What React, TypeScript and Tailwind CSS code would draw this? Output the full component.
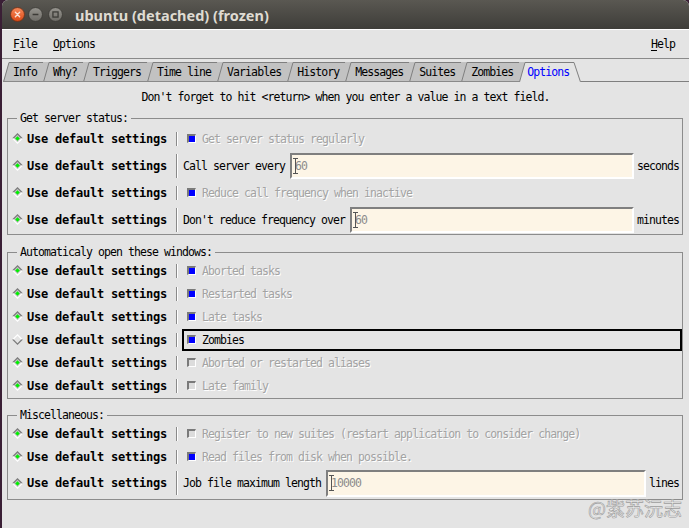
import React from "react";

function Diamond({ on }: { on: boolean }) {
  return (
    <svg width="11" height="11" viewBox="0 0 11 11" className="shrink-0">
      <polygon points="0,5.5 5.5,0 11,5.5" fill={on ? "#7a7a7a" : "#ffffff"} />
      <polygon points="0,5.5 5.5,11 11,5.5" fill={on ? "#ffffff" : "#7a7a7a"} />
      <polygon points="1.8,5.5 5.5,1.8 9.2,5.5 5.5,9.2" fill={on ? "#c4c4c4" : "#e4e4e4"} />
      {on && <polygon points="3.2,5.5 5.5,3.2 7.8,5.5 5.5,7.8" fill="#00f000" />}
    </svg>
  );
}

function IBeam() {
  return (
    <svg className="absolute left-[1px] top-1/2 -translate-y-1/2" width="6" height="16" viewBox="0 0 6 16">
      <path d="M0 0.5H5M2.5 0.5V15.5M0 15.5H5" stroke="#555" strokeWidth="1" fill="none" />
    </svg>
  );
}

function Row({
  h,
  on = true,
  sep,
  children,
}: {
  h: string;
  on?: boolean;
  sep: string;
  children: React.ReactNode;
}) {
  return (
    <div className={`flex items-center ${h}`}>
      <div className="w-[168px] shrink-0 flex items-center pl-[4px] gap-[4px]">
        <Diamond on={on} />
        <span className="font-bold text-[12px] tracking-[-0.22px]">Use default settings</span>
      </div>
      <div className={`w-[2px] shrink-0 border-l border-l-[#8a8a8a] border-r border-r-white ${sep}`} />
      <div className="flex-1 min-w-0 pl-[4px] flex items-center">{children}</div>
    </div>
  );
}

function Check({
  label,
  on,
  disabled = true,
  focus = false,
}: {
  label: string;
  on: boolean;
  disabled?: boolean;
  focus?: boolean;
}) {
  return (
    <div
      className={`flex-1 h-[22px] flex items-center pl-[3px] gap-[6px] border-2 ${
        focus ? "border-black" : "border-transparent"
      }`}
    >
      <span
        className={`w-[9px] h-[9px] shrink-0 border-t-2 border-l-2 border-t-[#7a7a7a] border-l-[#7a7a7a] border-b border-r border-b-white border-r-white ${
          on ? "bg-[#0000ff]" : "bg-[#dcdcdc]"
        }`}
      />
      <span className={disabled ? "text-[#a3a3a3] [text-shadow:1px_1px_0_#ffffff]" : "text-black"}>{label}</span>
    </div>
  );
}

function EntryW({ label, value, unit, h }: { label: string; value: string; unit: string; h: string }) {
  return (
    <div className="flex-1 flex items-center pl-[1px] pr-[3px]">
      <span className="whitespace-pre">{label}</span>
      <div
        className={`relative ml-[5px] flex-1 ${h} flex items-center bg-[#fdf5e6] border-2 border-t-[#7f7f7f] border-l-[#7f7f7f] border-b-white border-r-white pl-[3px]`}
      >
        <span className="text-[#8c8c8c]">{value}</span>
        <IBeam />
      </div>
      <span className="ml-[3px]">{unit}</span>
    </div>
  );
}

function Group({ title, mt, children }: { title: string; mt: string; children: React.ReactNode }) {
  return (
    <fieldset className={`${mt} ml-[5px] mr-[6px] border border-[#8c8c8c] px-0 pt-0 pb-[1px] min-w-0`}>
      <legend className="ml-[9px] px-[3px] leading-[14px]">{title}</legend>
      {children}
    </fieldset>
  );
}

function Tab({ label }: { label: string }) {
  return (
    <div className="relative h-[20px] flex items-center pl-[10px] pr-[6px]">
      <svg className="absolute left-0 top-0 overflow-visible" width="100%" height="20">
        <polygon points="0,20 6,0 6,20" fill="#c2c2c2" />
        <rect x="6" y="0" width="100%" height="20" fill="#c2c2c2" />
        <line x1="0.5" y1="20" x2="6" y2="0.5" stroke="#7f7f7f" strokeWidth="1" />
        <line x1="6" y1="0.5" x2="100%" y2="0.5" stroke="#7f7f7f" strokeWidth="1" />
        <line x1="0" y1="19.5" x2="100%" y2="19.5" stroke="#8a8a8a" strokeWidth="1" />
      </svg>
      <span className="relative">{label}</span>
    </div>
  );
}

function ActiveTab({ label }: { label: string }) {
  return (
    <div className="relative h-[20px] w-[62px] shrink-0 flex items-center pl-[8px]">
      <svg className="absolute left-0 top-0" width="62" height="20" viewBox="0 0 62 20">
        <polygon points="0.5,20 6,0.5 55,0.5 61.5,20" fill="#e4e4e4" />
        <polyline points="0.5,20 6,0.5 55,0.5 61.5,20" fill="none" stroke="#7f7f7f" strokeWidth="1" />
      </svg>
      <span className="relative text-[#0000ff]">{label}</span>
    </div>
  );
}

function TitleButtons() {
  return (
    <div className="flex items-center">
      <svg width="15" height="15" viewBox="0 0 14 14">
        <defs>
          <linearGradient id="cg" x1="0" y1="0" x2="0" y2="1">
            <stop offset="0" stopColor="#f78a5b" />
            <stop offset="1" stopColor="#dc4915" />
          </linearGradient>
        </defs>
        <circle cx="7" cy="7" r="6.5" fill="url(#cg)" stroke="#6e3016" strokeWidth="0.8" />
        <path d="M5 5L9 9M9 5L5 9" stroke="#fbe2d6" strokeWidth="1.3" strokeLinecap="round" />
      </svg>
      <svg width="15" height="15" viewBox="0 0 14 14" className="ml-[3px]">
        <defs>
          <linearGradient id="mg" x1="0" y1="0" x2="0" y2="1">
            <stop offset="0" stopColor="#97958f" />
            <stop offset="1" stopColor="#6d6b66" />
          </linearGradient>
        </defs>
        <circle cx="7" cy="7" r="6.5" fill="url(#mg)" stroke="#3a3935" strokeWidth="0.8" />
        <path d="M4.3 7H9.7" stroke="#3c3b37" strokeWidth="1.4" />
      </svg>
      <svg width="15" height="15" viewBox="0 0 14 14" className="ml-[5px]">
        <circle cx="7" cy="7" r="6.5" fill="url(#mg)" stroke="#3a3935" strokeWidth="0.8" />
        <rect x="4.6" y="4.6" width="4.8" height="4.8" fill="none" stroke="#3c3b37" strokeWidth="1.2" />
      </svg>
    </div>
  );
}

export default function App() {
  const tabs = ["Info", "Why?", "Triggers", "Time line", "Variables", "History", "Messages", "Suites", "Zombies"];
  return (
    <div className="w-[689px] h-[528px] bg-[#3a1f35] pl-[2px] overflow-hidden">
      <div className="relative w-[687px] h-[528px] flex flex-col bg-[#e4e4e4] rounded-t-[6px] overflow-hidden font-['DejaVu_Sans_Mono',monospace] text-[11.5px] leading-[14px] tracking-[-0.92px] text-black">
        {/* Title bar */}
        <div className="h-[29px] shrink-0 flex items-center bg-gradient-to-b from-[#5a5852] to-[#3e3d39] pl-[8px]">
          <TitleButtons />
          <span className="ml-[12px] font-['Noto_Sans',sans-serif] font-bold text-[14.5px] tracking-[0px] text-[#dfdbd2]">
            ubuntu (detached) (frozen)
          </span>
        </div>

        {/* Menu bar */}
        <div className="h-[30px] shrink-0 flex items-center border-t border-t-white border-b border-b-[#8a8a8a] pl-[11px] pr-[14px]">
          <span>
            <u className="underline-offset-[2px]">F</u>ile
          </span>
          <span className="ml-[16px]">
            <u className="underline-offset-[2px]">O</u>ptions
          </span>
          <span className="ml-auto">
            <u className="underline-offset-[2px]">H</u>elp
          </span>
        </div>

        {/* Tabs */}
        <div className="mt-[3px] h-[20px] shrink-0 flex pl-[1px]">
          {tabs.map((t) => (
            <Tab key={t} label={t} />
          ))}
          <ActiveTab label="Options" />
          <div className="flex-1 border-b border-b-[#7f7f7f]" />
        </div>

        <div className="mt-[8px] text-center">Don't forget to hit &lt;return&gt; when you enter a value in a text field.</div>

        <Group title="Get server status:" mt="mt-[7px]">
          <Row h="h-[27px]" sep="h-[14px]">
            <Check label="Get server status regularly" on />
          </Row>
          <Row h="h-[27px]" sep="h-[24px]">
            <EntryW label="Call server every" value="60" unit="seconds" h="h-[26px]" />
          </Row>
          <Row h="h-[27px]" sep="h-[14px]">
            <Check label="Reduce call frequency when inactive" on />
          </Row>
          <Row h="h-[27px]" sep="h-[24px]">
            <EntryW label="Don't reduce frequency over" value="60" unit="minutes" h="h-[26px]" />
          </Row>
        </Group>

        <Group title="Automaticaly open these windows:" mt="mt-[10px]">
          <Row h="h-[23px]" sep="h-[14px]">
            <Check label="Aborted tasks" on />
          </Row>
          <Row h="h-[23px]" sep="h-[14px]">
            <Check label="Restarted tasks" on />
          </Row>
          <Row h="h-[23px]" sep="h-[14px]">
            <Check label="Late tasks" on />
          </Row>
          <Row h="h-[23px]" sep="h-[14px]" on={false}>
            <Check label="Zombies" on disabled={false} focus />
          </Row>
          <Row h="h-[23px]" sep="h-[14px]">
            <Check label="Aborted or restarted aliases" on={false} />
          </Row>
          <Row h="h-[23px]" sep="h-[14px]">
            <Check label="Late family" on={false} />
          </Row>
        </Group>

        <Group title="Miscellaneous:" mt="mt-[9px]">
          <Row h="h-[23px]" sep="h-[14px]">
            <Check label="Register to new suites (restart application to consider change)" on={false} />
          </Row>
          <Row h="h-[23px]" sep="h-[14px]">
            <Check label="Read files from disk when possible." on />
          </Row>
          <Row h="h-[30px]" sep="h-[24px]">
            <EntryW label="Job file maximum length" value="10000" unit="lines" h="h-[27px]" />
          </Row>
        </Group>

        <div className="absolute right-[7px] bottom-[9px] font-['Noto_Sans_CJK_SC',sans-serif] text-[19px] leading-[22px] tracking-[0px] text-[#efefef] [-webkit-text-stroke:0.6px_#9c9c9c]">
          @紫苏沅志
        </div>
      </div>
    </div>
  );
}
